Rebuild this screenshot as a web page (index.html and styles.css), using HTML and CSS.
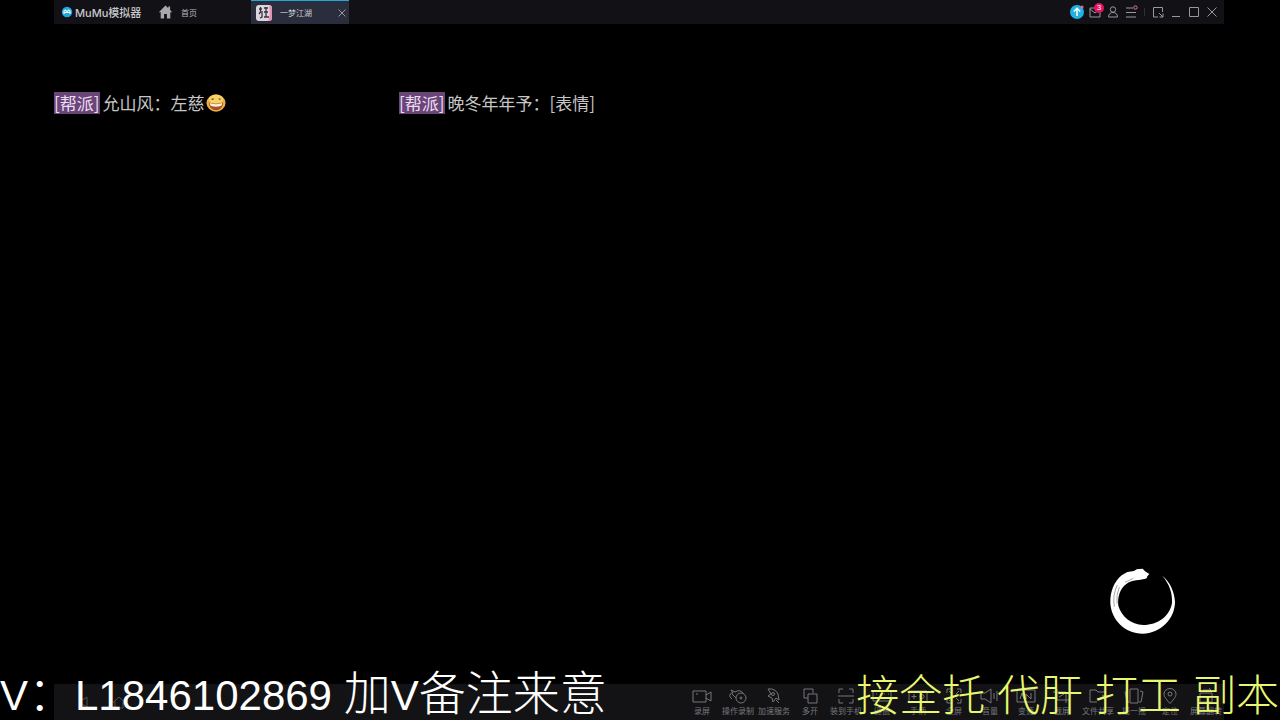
FILE: index.html
```html
<!DOCTYPE html>
<html lang="zh-CN">
  <head>
    <meta charset="UTF-8" />
    <meta name="viewport" content="width=device-width, initial-scale=1.0" />
    <title>MuMu模拟器</title>
    <link rel="stylesheet" href="styles.css">
  </head>
  <body>
    <div class="window">
      <header class="titlebar">
        <div class="brand">
          <svg class="brand-logo" viewBox="0 0 12 12"><circle cx="6" cy="6" r="5.2" fill="#23a8dc" /><path d="M3 8V5l1.5-1L6 6l1.5-2L9 5v3M3 6.5h6" fill="none" stroke="#e4f7ff" stroke-width="1.2" /></svg>
          <span>MuMu模拟器</span>
        </div>
        <button class="home">
          <svg class="home-icon" viewBox="0 0 14 14"><path d="M7 0.5 0.3 7.2h1.9v6.3h3.4V9h2.8v4.5h3.4V7.2h1.9L11.6 5V1.5H9.8v1.8z" fill="#a9a9ab" /></svg>
          <span>首页</span>
        </button>
        <div class="tab">
          <svg class="tab-icon" viewBox="0 0 16 16"><rect width="16" height="16" rx="3" fill="#dcd5df" /><path d="M13 1q3 0 3 3v9q0 3-4 3 3-6 1-15" fill="#e78fb8" /><path d="M3 4h3M4.5 2v5L3 9M6 6v6l-2 1M8 3h4M10 2v10M8 7h4M8 12h5" fill="none" stroke="#39313f" stroke-width="1.3" /></svg>
          <span class="tab-name">一梦江湖</span>
          <button class="tab-close" aria-label="关闭标签"><svg class="tool" viewBox="0 0 14 14"><path d="m3.5 3.5 7 7m0-7-7 7" /></svg></button>
        </div>
        <div class="tools">
          <button aria-label="升级"><svg class="tool" viewBox="0 0 14 14"><circle cx="7" cy="7" r="7" fill="#1fb2e2" stroke="none" /><path d="M7 11V3.5M3.8 6.5 7 3.3l3.2 3.2" stroke="#fff" stroke-width="1.5" /><circle cx="12" cy="2" r="1.6" fill="#d8688e" stroke="none" /></svg></button>
          <button class="mail" aria-label="消息"><svg class="tool" viewBox="0 0 14 14"><path d="M2 3h10v9H2zM2 4l5 4 5-4" /></svg><span class="count">3</span></button>
          <button aria-label="账号"><svg class="tool" viewBox="0 0 14 14"><circle cx="7" cy="4.5" r="2.7" /><path d="M2.5 12c0-3 2-4.500 4.500-4.500s4.500 1.500 4.500 4.500z" /></svg></button>
          <button aria-label="菜单"><svg class="tool" viewBox="0 0 14 14"><path d="M2 3h7M2 7.500h10M2 12h10" /><circle cx="11.500" cy="2.500" r="1.700" stroke="#d87a98" /></svg></button>
          <i class="divider"></i>
          <button aria-label="小窗"><svg class="tool" viewBox="0 0 14 14"><path d="M7 12H2.500V2.500H11.500V7M8 8l4 4M12 8.500V12H8.500" /></svg></button>
          <button aria-label="最小化"><svg class="tool" viewBox="0 0 14 14"><path d="M3 11.500h8" /></svg></button>
          <button aria-label="最大化"><svg class="tool" viewBox="0 0 14 14"><path d="M2.500 2.500h9v9h-9z" /></svg></button>
          <button aria-label="关闭"><svg class="tool" viewBox="0 0 14 14"><path d="m2.500 2.500 9 9m0-9-9 9" /></svg></button>
        </div>
      </header>

      <main class="game">
        <div class="chat">
          <p><span class="guild">[帮派]</span>允山风：左慈<svg class="emoji" viewBox="0 0 22 22"><ellipse cx="11" cy="11" rx="10.500" ry="9.500" fill="#eeb044" /><ellipse cx="11" cy="7" rx="8" ry="5" fill="#f8d268" /><path d="M3 10.500q8 2.500 16 0-1 8.500-8 8.500t-8-8.500" fill="#a4502a" /><path d="M4 11q7 2.500 14 0l-1 3q-6 2-12 0z" fill="#fff0d4" /><path d="M6 7 8.500 6.500M14 6.500l2 .500" stroke="#7a4c20" stroke-width="1.500" /></svg></p>
          <p><span class="guild">[帮派]</span>晚冬年年予：[表情]</p>
        </div>
        <svg class="ink-ring" viewBox="54 36 204 204">
          <path d="M178 57 165 49 158 41 140 43 132 48 112 51 95 61C72 80 60 110 61 145c3 50 44 91 97 91 54-2 97-44 97-96-2-30-15-60-38-78 20 24 31 50 29 82-7 40-42 66-86 66-38-2-65-25-75-58-3-25 5-53 24-65 16-13 43-10 61-17l2-6z" fill="#fff" />
          <path d="M82 90q-15 30-9 65M88 96q-10 24-7 50M105 82l25-12" fill="none" stroke="#777" stroke-width="2" />
        </svg>
      </main>

      <footer class="toolbar">
        <nav class="keys">
          <button aria-label="返回"><svg viewBox="0 0 16 16"><path d="M12 3v10L4 8z" /></svg></button>
          <button aria-label="主页"><svg viewBox="0 0 16 16"><path d="M2 8.500 8 3l6 5.500M4 7.500V14h8V7.500" /></svg></button>
        </nav>
        <div class="actions">
          <button><svg viewBox="0 0 20 16"><path d="M1 3h13v11H1zM14 7l5-3v9l-5-3M4 6h2" /></svg><span>录屏</span></button>
          <button><svg viewBox="0 0 20 16"><path d="M4 11C0 8 2 5 5 5L3 2l4 2q5-3 8 1M4 6l4 4" /><circle cx="13" cy="10" r="5" /><circle cx="13" cy="10" r="1" /></svg><span>操作录制</span></button>
          <button><svg viewBox="0 0 20 16"><path d="M4 1q7-1 10 5l1 6-3-2-3 4-1-4-4-2 3-2zM12 12l3 3" /><circle cx="9" cy="6" r="1.500" /></svg><span>加速服务</span></button>
          <button><svg viewBox="0 0 20 16"><path d="M8 10H4V1h9v4M8 6h9v9H8z" /></svg><span>多开</span></button>
          <button><svg viewBox="0 0 20 16"><path d="M3 5V1h4M13 1h4v4M3 11v4h4M13 15h4v-4M2 8h16" /></svg><span>装到手机</span></button>
          <button><svg viewBox="0 0 20 16"><path d="M1 3h18v10H1zM4 6h1m3 0h1m3 0h1m3 0h1M5 10h10" /></svg><span>键鼠</span></button>
          <button><svg viewBox="0 0 20 16"><path d="M1 3h18v11H1zM6 6v5M3.500 8.500h5" /><circle cx="14" cy="8.500" r="2" /></svg><span>手柄</span></button>
          <button><svg viewBox="0 0 20 16"><path d="M3 5V1h4M13 1h4v4M3 11v4h4M13 15h4v-4M8 6 5 3m7 3 3-3M8 10l-3 3m7-3 3 3" /></svg><span>全屏</span></button>
          <button><svg viewBox="0 0 20 16"><path d="M1 5h4l6-4v14l-6-4H1zM14 5v6M17 3v10" /></svg><span>音量</span></button>
          <button><svg viewBox="0 0 20 16"><path d="M1 2h18v12H1zM4 11l2-6 2 6m2 0V6l5 5V5" /></svg><span>变速</span></button>
          <button><svg viewBox="0 0 20 16"><path d="M5 1v11h13M1 4h13v11M7 9l5-3" /></svg><span>截屏</span></button>
          <button><svg viewBox="0 0 20 16"><path d="M17 7V4h-7L8 2H2v12h7M10 11l8-3M14 7l4 1-2 4" /></svg><span>文件共享</span></button>
          <button><svg viewBox="0 0 20 16"><path d="M6 1h8v14H6zM4 3 1 4l2 10 2 0M16 3l3 1-2 10-2 0" /></svg><span>摇一摇</span></button>
          <button><svg viewBox="0 0 20 16"><path d="M10 15.500C5 10 4 8 4 6a6 5.500 0 0 1 12 0c0 2-1 4-6 9.500z" /><circle cx="10" cy="6" r="2" /></svg><span>定位</span></button>
          <button><svg viewBox="0 0 20 16"><path d="M4 5h12v9H4zM7 2h8l-2-2M13 4l2-2" /></svg><span>屏幕翻转</span></button>
        </div>
      </footer>
    </div>

    <div class="banner contact">V<span class="han">：</span>L1846102869 <span class="han">加</span>V<span class="han">备注来意</span></div>
    <div class="banner services">接全托 代肝 打工 副本</div>
  </body>
</html>
```
FILE: styles.css
```css
* {
  box-sizing: border-box;
}
body {
  position: relative;
  margin: 0;
  min-height: 100vh;
  overflow: hidden;
  background-color: #000;
  color: #b4b4b6;
  font-family: "Liberation Sans", "Noto Sans CJK SC", sans-serif;
}
button {
  display: flex;
  align-items: center;
  justify-content: center;
  padding: 0;
  border: 0;
  background: none;
  color: inherit;
  font-family: inherit;
  font-size: 8px;
  cursor: pointer;
}
svg {
  flex: none;
}
.window {
  display: flex;
  flex-direction: column;
  min-height: 100vh;
  margin: 0 56px 0 54px;
}

/* title bar */
.titlebar {
  display: flex;
  align-items: stretch;
  height: 24px;
  background-color: #121216;
}
.brand {
  display: flex;
  align-items: center;
  gap: 2px;
  width: 104px;
  padding-left: 7px;
  color: #c8c8ca;
  font-family: Inter, "Noto Sans CJK SC", sans-serif;
  font-size: 11px;
  font-weight: 500;
}
.brand-logo {
  width: 12px;
  height: 12px;
}
.home {
  gap: 8px;
}
.home-icon {
  width: 15px;
  height: 14px;
}
.tab {
  display: flex;
  align-items: center;
  width: 98px;
  margin-left: 54px;
  padding-left: 5px;
  border-top: 1px solid #23a6d5;
  background-color: #2a2d3c;
}
.tab-icon {
  width: 16px;
  height: 16px;
}
.tab-name {
  flex: 1;
  margin-left: 8px;
  color: #d0d0d4;
  font-size: 8px;
}
.tool {
  width: 14px;
  height: 14px;
  fill: none;
  stroke: #98989c;
}
.tools {
  display: flex;
  margin-left: auto;
  padding-right: 3px;
}
.tools button {
  width: 18px;
}
.divider {
  align-self: center;
  width: 1px;
  height: 8px;
  margin: 0 4px;
  background-color: #303034;
}
.mail {
  position: relative;
}
.count {
  position: absolute;
  top: 3px;
  right: 0;
  width: 10px;
  height: 10px;
  border-radius: 50%;
  background-color: #e31362;
  color: #fff;
  line-height: 10px;
}

/* game area */
.game {
  flex: 1;
  display: flex;
  flex-direction: column;
  justify-content: space-between;
  padding: 68px 48px 49px 0;
}
.chat {
  display: grid;
  grid-template-columns: 345px 1fr;
  color: #c6c6c6;
  font-family: "Noto Sans CJK SC", sans-serif;
  font-size: 17px;
  line-height: 22px;
}
.chat p {
  display: flex;
  align-items: center;
  margin: 0;
}
.guild {
  margin-right: 3px;
  background-color: #694578;
  color: #ecdcf2;
}
.emoji {
  width: 22px;
  height: 20px;
}
.ink-ring {
  align-self: flex-end;
  width: 68px;
  height: 68px;
}

/* bottom toolbar */
.toolbar {
  display: flex;
  justify-content: space-between;
  height: 36px;
  background-color: #131316;
}
.toolbar svg {
  fill: none;
  stroke: #77777a;
}
.keys {
  display: flex;
  padding-left: 11px;
}
.keys button {
  width: 36px;
}
.keys svg {
  width: 16px;
  height: 16px;
  stroke: #505053;
}
.actions {
  display: flex;
}
.actions button {
  flex-direction: column;
  justify-content: flex-start;
  gap: 2px;
  width: 36px;
  padding-top: 4px;
  color: #77777a;
  line-height: 12px;
  white-space: nowrap;
}
.actions svg {
  width: 20px;
  height: 16px;
}

/* stream captions lying over the window */
.banner {
  position: absolute;
  bottom: 0;
  line-height: 48px;
  white-space: nowrap;
}
.contact {
  left: 0;
  color: #fff;
  font-size: 42px;
}
.han {
  font-size: 47px;
  font-weight: 300;
}
.services {
  right: 1px;
  color: #e9f770;
  font-size: 43px;
  font-weight: 300;
}
```
